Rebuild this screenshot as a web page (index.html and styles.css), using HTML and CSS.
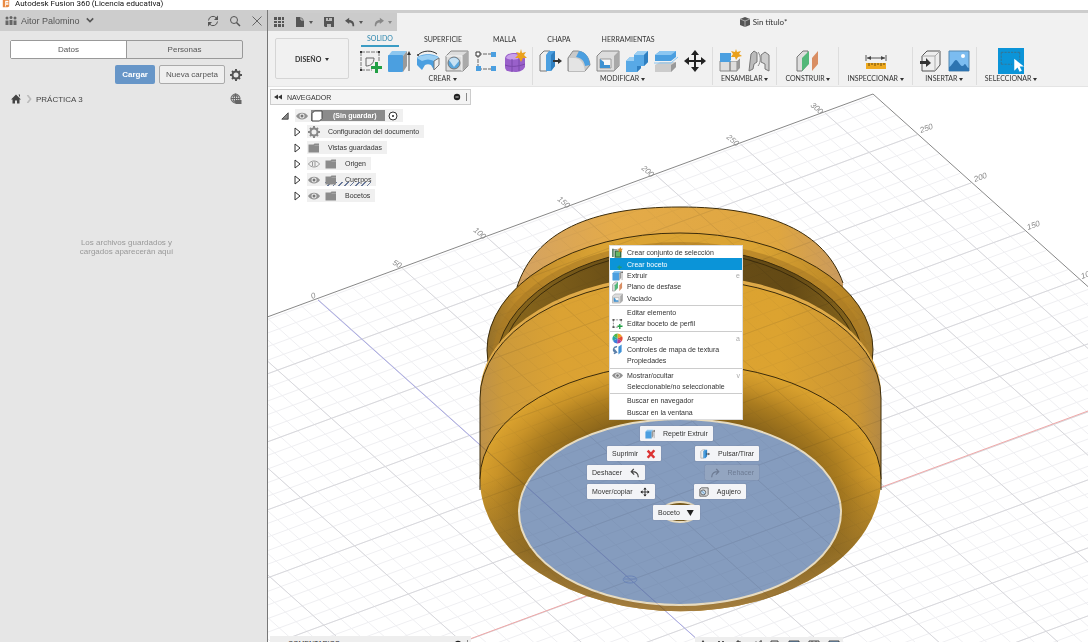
FILE: index.html
```html
<!DOCTYPE html>
<html lang="es">
<head>
    <meta charset="UTF-8">
    <meta name="viewport" content="width=device-width, initial-scale=1.0">
    <title>Autodesk Fusion 360 (Licencia educativa)</title>
    <link rel="stylesheet" href="styles.css">
</head>
<body>
    <!-- Iconos compartidos -->
    <svg class="sprite" aria-hidden="true">
        <symbol id="sketch" viewBox="0 0 24 24">
            <path d="M3 3h18M3 21h11M3 3v18M21 3v10" fill="none" stroke="#777" stroke-dasharray="4 1"/>
            <path d="M8 17V9h8M8 17c5 0 8-3 8-8" fill="none" stroke="#666"/>
            <path d="M2 2h2v2H2zM20 2h2v2h-2zM2 20h2v2H2z" fill="#333"/>
            <path d="M17 13h3v4h4v3h-4v4h-3v-4h-4v-3h4z" fill="#22a045"/>
        </symbol>
        <symbol id="extrude" viewBox="0 0 24 24">
            <path d="M1 7l4-5h15l-4 5z" fill="#8cc6ef"/>
            <rect x="1" y="6" width="15" height="17" rx="1" fill="#4b9fe0"/>
            <path d="M16 7l4-5v15l-4 6z" fill="#9a9a9a"/>
            <path d="M22 22V4" stroke="#555"/><path d="M20 6l2-4 2 4z" fill="#333"/>
        </symbol>
        <symbol id="revolve" viewBox="0 0 24 24">
            <path d="M1 9c3-5 19-5 22 0v7l-5 5-3-5c-2-1-4-1-6 0l-3 5-5-5z" fill="#4b9fe0"/>
            <path d="M1 9c3-4 19-4 22 0l-5 3c-4-2-8-2-12 0z" fill="#9bcff3"/>
            <path d="M18 12l5-3v7l-5 5z" fill="#eee" stroke="#777"/>
            <path d="M2 6c5-5 14-5 19-1" fill="none" stroke="#333"/><circle cx="2" cy="6" r="1" fill="#333"/>
        </symbol>
        <symbol id="hole" viewBox="0 0 24 24">
            <path d="M1 7l5-5h17v15l-5 5H1z" fill="#ddd" stroke="#888"/>
            <path d="M17 7l6-5v15l-6 5z" fill="#aaa"/><path d="M1 7h16v15" fill="none" stroke="#f5f5f5"/>
            <circle cx="9" cy="14" r="6" fill="#5aa6dc" stroke="#777"/><path d="M4 11a6 6 0 0 1 10 1l-5 6z" fill="#c8e2f4"/>
        </symbol>
        <symbol id="pattern" viewBox="0 0 24 24">
            <path d="M4 5h16M4 5v15h16" fill="none" stroke="#666" stroke-dasharray="4 1"/>
            <path d="M2 3h4v4H2z" fill="#fff" stroke="#333"/>
            <path d="M17 3h5v5h-5zM2 17h5v5H2zM17 17h5v5h-5z" fill="#4b9fe0"/>
        </symbol>
        <symbol id="form" viewBox="0 0 24 24">
            <path d="M2 9c1-4 5-5 10-5 6 0 10 2 10 6v8c-2 4-6 5-10 5-6 0-10-1-10-5z" fill="#9960ca"/>
            <path d="M3 9c1-3 4-4 9-4l4 1-1 4c-5 1-9 1-12-1z" fill="#c9a0ea"/>
            <path d="M2 16c5 2 12 2 20-1M9 10v13M16 10v12" fill="none" stroke="#7b48aa"/>
            <path d="M18 0l1 4 4-1-2 3 3 3-4 0-2 4-2-4-4 0 3-3-2-3 4 1z" fill="#eaa11c"/>
        </symbol>
        <symbol id="presspull" viewBox="0 0 24 24">
            <path d="M2 6l4-4h6L9 6v16H2z" fill="#eee" stroke="#777"/>
            <path d="M8 6l3-4h6v15l-4 5H8z" fill="#4b9fe0"/><path d="M13 6l4-4v15l-4 5z" fill="#2f7fc0"/>
            <path d="M15 12h5" stroke="#333" stroke-width="2"/><path d="M20 9l4 3-4 3z" fill="#333"/>
        </symbol>
        <symbol id="fillet" viewBox="0 0 24 24">
            <path d="M1 22V9l5-7h5c7 1 11 6 12 14l-5 6z" fill="#c9c9c9" stroke="#888"/>
            <path d="M2 9h5c7 0 10 6 11 13H2z" fill="#e4e4e4"/>
            <path d="M12 2c7 1 10 6 11 14l-5 1C17 11 14 9 9 8z" fill="#4b9fe0"/>
        </symbol>
        <symbol id="shell" viewBox="0 0 24 24">
            <path d="M1 7l5-5h17v15l-5 5H1z" fill="#ddd" stroke="#888"/>
            <path d="M18 7l5-5v15l-5 5z" fill="#a9a9a9"/>
            <path d="M4 10h11v9H4z" fill="#f8f8f8" stroke="#999"/><path d="M4 10l4 3v3h6v3H4z" fill="#3f92d2"/>
        </symbol>
        <symbol id="combine" viewBox="0 0 24 24">
            <path d="M9 6l4-4h10v11l-4 4h-3v2l-4 4H1V12l4-4h4z" fill="#58a9e6"/>
            <path d="M9 6l4-4h10l-4 4zM1 12l4-4h4v4z" fill="#9bcff3"/><path d="M19 6l4-4v11l-4 4zM12 17h4v2l-4 4z" fill="#2f7fc0"/>
        </symbol>
        <symbol id="split" viewBox="0 0 24 24">
            <path d="M1 6l5-4h16v6l-5 4H1z" fill="#4b9fe0"/><path d="M1 6l5-4h16l-5 4z" fill="#8bc6f1"/>
            <path d="M1 16l5-3h16v5l-5 5H1z" fill="#ccc"/><path d="M17 16l5-3v5l-5 5z" fill="#999"/>
            <path d="M0 14h17l7-6" fill="none" stroke="#8bc6f1"/>
        </symbol>
        <symbol id="move" viewBox="0 0 24 24">
            <path d="M12 3v18M3 12h18" stroke="#222" stroke-width="2"/>
            <path d="M12 1l4 5H8zM12 23l4-5H8zM1 12l5-4v8zM23 12l-5-4v8z" fill="#222"/>
        </symbol>
        <symbol id="component" viewBox="0 0 24 24">
            <path d="M2 12h10v10H2zM12 12h7v10h-7z" fill="#dedede" stroke="#888"/><path d="M19 12l3-3v10l-3 3z" fill="#999"/>
            <path d="M2 4h11v9H2z" fill="#4b9fe0"/><path d="M12 12l3-3h7l-3 3z" fill="#f4f4f4"/>
            <path d="M18 0l1 3 4-1-2 3 3 2-4 1-2 3-1-3-4 0 2-3-2-3 4 1z" fill="#eaa11c"/>
        </symbol>
        <symbol id="joint" viewBox="0 0 24 24">
            <path d="M4 5l3-3 3 2v9l-3 2-1 5-4 2 1-9z" fill="#bbb" stroke="#777"/>
            <path d="M14 6l4-3 4 3v16l-4-2v-5l-4-2z" fill="#ccc" stroke="#777"/><path d="M11 3c3 4 3 10 0 14" fill="none" stroke="#888"/>
        </symbol>
        <symbol id="planes" viewBox="0 0 24 24">
            <path d="M1 8l6-6h5v13l-6 7H1z" fill="#ddd" stroke="#777"/>
            <path d="M6 9l7-7v13l-7 7z" fill="#52b879"/><path d="M16 9l6-7v13l-6 7z" fill="#d98e63"/>
        </symbol>
        <symbol id="measure" viewBox="0 0 24 24">
            <path d="M2 6v6M22 6v6M3 9h18" stroke="#555"/><path d="M3 9l4-2v4zM21 9l-4-2v4z" fill="#444"/>
            <path d="M2 14h20v6H2z" fill="#efaa20"/><path d="M5 14v3M8 14v2M11 14v3M14 14v2M17 14v3M20 14v2" stroke="#6b4b0b"/>
        </symbol>
        <symbol id="insert" viewBox="0 0 24 24">
            <path d="M4 7l5-5h13v14l-5 6H4z" fill="#eee" stroke="#555"/><path d="M4 7h13v15M17 7l5-5" fill="none" stroke="#aaa"/>
            <path d="M2 12h6V9l5 5-5 4v-3H2z" fill="#333"/>
        </symbol>
        <symbol id="picture" viewBox="0 0 24 24">
            <path d="M2 2h20v20H2z" fill="#7bbcf0" stroke="#5688af"/><circle cx="16" cy="7" r="2" fill="#fff"/>
            <path d="M2 18c3-1 5-7 7-7s4 6 6 6 2-2 3-2 2 4 4 4v3H2z" fill="#2d74b1"/>
        </symbol>
        <symbol id="select" viewBox="0 0 24 24">
            <path d="M0 0h24v24H0z" fill="#0b94d8"/><path d="M3 4h17M3 15h10M3 4v11M20 4v7" stroke="#337799" stroke-dasharray="2 1"/>
            <path d="M15 10v11l3-3 2 4 2-1-2-4h4z" fill="#fff"/>
        </symbol>
        <symbol id="eye" viewBox="0 0 24 24">
            <path d="M0 12c5-9 19-9 24 0-5 9-19 9-24 0z" fill="#929292"/><circle cx="12" cy="12" r="5" fill="#eee"/><circle cx="12" cy="12" r="3" fill="#777"/>
        </symbol>
        <symbol id="eye-off" viewBox="0 0 24 24">
            <path d="M1 12c5-8 17-8 22 0-5 8-17 8-22 0z" fill="none" stroke="#999" stroke-width="2"/><path d="M9 8v8M14 7v10" stroke="#999" stroke-width="2"/>
        </symbol>
        <symbol id="folder" viewBox="0 0 24 24"><path d="M1 5h10l2-2h9v18H1z" fill="#8b8b8b"/><path d="M13 7h9" stroke="#bbb"/></symbol>
        <symbol id="gear" viewBox="0 0 24 24">
            <circle cx="12" cy="12" r="7" fill="none" stroke="currentColor" stroke-width="4"/>
            <path d="M12 0v5M12 19v5M0 12h5M19 12h5M4 4l3 3M17 17l3 3M20 4l-3 3M4 20l3-3" stroke="currentColor" stroke-width="4"/>
        </symbol>
        <symbol id="undo" viewBox="0 0 24 24"><path d="M0 9l10-7v5c8 0 13 5 12 15h-4c0-6-2-9-8-9v4z" fill="currentColor"/></symbol>
        <symbol id="redo" viewBox="0 0 24 24"><path d="M24 9L14 2v5C6 7 1 12 2 22h3c1-6 3-9 9-9v4z" fill="currentColor"/></symbol>
    </svg>

    <header class="titlebar">
        <svg class="logo" viewBox="0 0 10 10"><path d="M1 0h8v8L7 9H1z" fill="#e98a43"/><path d="M4 1h4v2H5v1h3v2H5v2H4z" fill="#fff"/></svg>
        <span>Autodesk Fusion 360 (Licencia educativa)</span>
    </header>

    <div class="app">
        <aside class="data-panel">
            <div class="panel-head">
                <svg class="icon-12" viewBox="0 0 24 24" fill="#666"><circle cx="4" cy="6" r="3"/><circle cx="12" cy="5" r="3"/><circle cx="20" cy="6" r="3"/><path d="M1 11h6v9H1zM9 10h6v10H9zM17 11h6v9h-6z"/></svg>
                <button class="team">Aitor Palomino
                    <svg class="icon-8" viewBox="0 0 10 10"><path d="M1 3l4 4 4-4" fill="none" stroke="#555" stroke-width="2"/></svg>
                </button>
                <button class="plain" aria-label="Actualizar"><svg class="icon-12" viewBox="0 0 24 24"><path d="M3 11a9 9 0 0 1 16-5M21 13a9 9 0 0 1-16 5" fill="none" stroke="#555" stroke-width="2"/><path d="M22 1v9h-8zM2 23v-9h8z" fill="#555"/></svg></button>
                <button class="plain" aria-label="Buscar"><svg class="icon-12" viewBox="0 0 24 24"><circle cx="10" cy="10" r="7" fill="none" stroke="#555" stroke-width="2"/><path d="M15 15l7 7" stroke="#555" stroke-width="3"/></svg></button>
                <button class="plain" aria-label="Cerrar"><svg class="icon-12" viewBox="0 0 24 24"><path d="M3 3l18 18M21 3L3 21" stroke="#666" stroke-width="2"/></svg></button>
            </div>
            <div class="panel-tabs">
                <button class="active">Datos</button>
                <button>Personas</button>
            </div>
            <div class="panel-actions">
                <button class="upload">Cargar</button>
                <button class="new-folder">Nueva carpeta</button>
                <button class="plain" aria-label="Ajustes"><svg class="icon-12"><use href="#gear"/></svg></button>
            </div>
            <div class="breadcrumb">
                <svg class="icon-12" viewBox="0 0 24 24"><path d="M12 3l10 10h-3v8h-5v-6h-4v6H5v-8H2zM17 3h3v6z" fill="#444"/></svg>
                <svg class="icon-8" viewBox="0 0 10 10"><path d="M3 0l4 5-4 5" fill="none" stroke="#bbb" stroke-width="2"/></svg>
                <a href="#">PRÁCTICA 3</a>
                <svg class="icon-12 globe" viewBox="0 0 24 24"><circle cx="11" cy="11" r="9" fill="#ddd" stroke="#666" stroke-width="2"/><path d="M2 11h18M11 2v18M4 6h14M4 16h14M11 2c-6 4-6 14 0 18M11 2c6 4 6 14 0 18" fill="none" stroke="#666" stroke-width="2"/><path d="M12 14h11v8H12z" fill="#666"/></svg>
            </div>
            <p class="empty">Los archivos guardados y<br>cargados aparecerán aquí</p>
        </aside>

        <main class="workspace">
            <div class="topbar">
                <div class="quick">
                    <button class="plain" aria-label="Panel de datos"><svg class="icon-10" viewBox="0 0 10 10"><path d="M0 0h3v3H0zM4 0h3v3H4zM8 0h2v3H8zM0 4h3v2H0zM4 4h3v2H4zM8 4h2v2H8zM0 7h3v3H0zM4 7h3v3H4zM8 7h2v3H8z" fill="#555"/></svg></button>
                    <button class="plain" aria-label="Archivo"><svg class="icon-10" viewBox="0 0 10 10"><path d="M1 0h5l3 3v7H1z" fill="#555"/><path d="M6 0v3h3" fill="none" stroke="#ccc"/></svg><i class="caret"></i></button>
                    <button class="plain" aria-label="Guardar"><svg class="icon-10" viewBox="0 0 10 10"><path d="M0 0h10v10H1L0 9z" fill="#555"/><path d="M2 1h6v3H2zM3 7h4v3H3z" fill="#bbb"/><path d="M4 1h1v2H4z" fill="#555"/></svg></button>
                    <button class="plain" aria-label="Deshacer"><svg class="icon-10"><use href="#undo"/></svg><i class="caret"></i></button>
                    <button class="plain dim" aria-label="Rehacer"><svg class="icon-10"><use href="#redo"/></svg><i class="caret"></i></button>
                </div>
                <div class="doc-title">
                    <svg class="icon-10" viewBox="0 0 10 10"><path d="M0 2l5-2 5 2v6l-5 2-5-2z" fill="#555"/><path d="M0 2l5 2v6M5 4l5-2" stroke="#aaa" fill="none"/></svg>
                    Sin título*
                </div>
            </div>

            <div class="ribbon">
                <button class="mode">DISEÑO <i class="caret"></i></button>
                <div class="tools">
                    <nav class="tabs">
                        <button class="active">SOLIDO</button>
                        <button>SUPERFICIE</button>
                        <button>MALLA</button>
                        <button>CHAPA</button>
                        <button>HERRAMIENTAS</button>
                    </nav>
                    <div class="groups">
                        <section class="group">
                            <div class="icons">
                                <svg><use href="#sketch"/></svg><svg><use href="#extrude"/></svg><svg><use href="#revolve"/></svg>
                                <svg><use href="#hole"/></svg><svg><use href="#pattern"/></svg><svg><use href="#form"/></svg>
                            </div>
                            <button>CREAR <i class="caret"></i></button>
                        </section>
                        <section class="group">
                            <div class="icons">
                                <svg><use href="#presspull"/></svg><svg><use href="#fillet"/></svg><svg><use href="#shell"/></svg>
                                <svg><use href="#combine"/></svg><svg><use href="#split"/></svg><svg><use href="#move"/></svg>
                            </div>
                            <button>MODIFICAR <i class="caret"></i></button>
                        </section>
                        <section class="group">
                            <div class="icons"><svg><use href="#component"/></svg><svg><use href="#joint"/></svg></div>
                            <button>ENSAMBLAR <i class="caret"></i></button>
                        </section>
                        <section class="group">
                            <div class="icons"><svg><use href="#planes"/></svg></div>
                            <button>CONSTRUIR <i class="caret"></i></button>
                        </section>
                        <section class="group">
                            <div class="icons"><svg><use href="#measure"/></svg></div>
                            <button>INSPECCIONAR <i class="caret"></i></button>
                        </section>
                        <section class="group">
                            <div class="icons"><svg><use href="#insert"/></svg><svg><use href="#picture"/></svg></div>
                            <button>INSERTAR <i class="caret"></i></button>
                        </section>
                        <section class="group">
                            <div class="icons"><svg class="big"><use href="#select"/></svg></div>
                            <button>SELECCIONAR <i class="caret"></i></button>
                        </section>
                    </div>
                </div>
            </div>

            <div class="canvas">
                <svg class="scene" viewBox="268 87 820 555" preserveAspectRatio="xMinYMin slice">
                    <defs>
                        <linearGradient id="capFill"><stop offset="0" stop-color="#d3a262"/><stop offset=".3" stop-color="#e4ab49"/><stop offset=".8" stop-color="#dfa640"/><stop offset="1" stop-color="#c99a5f"/></linearGradient>
                        <linearGradient id="flangeFill"><stop offset="0" stop-color="#94702a"/><stop offset=".08" stop-color="#c08b29"/><stop offset=".3" stop-color="#dba434"/><stop offset=".7" stop-color="#dba434"/><stop offset=".93" stop-color="#b98625"/><stop offset="1" stop-color="#a57b2c"/></linearGradient>
                        <linearGradient id="grooveFill"><stop offset="0" stop-color="#8c691d"/><stop offset=".3" stop-color="#6d5117"/><stop offset=".8" stop-color="#644a15"/><stop offset="1" stop-color="#8c691d"/></linearGradient>
                        <linearGradient id="bodyFill"><stop offset="0" stop-color="#bd9149"/><stop offset=".06" stop-color="#cd9a3a"/><stop offset=".2" stop-color="#dba233"/><stop offset=".75" stop-color="#dca330"/><stop offset=".94" stop-color="#cc9633"/><stop offset="1" stop-color="#b48944"/></linearGradient>
                        <radialGradient id="baseFill" gradientUnits="userSpaceOnUse" cx="0" cy="0" r="1" gradientTransform="translate(680 495) scale(206 131)"><stop offset=".62" stop-color="#89641a"/><stop offset=".78" stop-color="#a97b1f"/><stop offset=".9" stop-color="#c99328"/><stop offset="1" stop-color="#d9a12e"/></radialGradient>
                        <linearGradient id="baseShade" x2="0" y2="1"><stop offset=".45" stop-color="#73551c" stop-opacity="0"/><stop offset=".75" stop-color="#735823" stop-opacity=".6"/><stop offset="1" stop-color="#a07c42" stop-opacity=".9"/></linearGradient>
                        <clipPath id="modelClip"><path d="M480 398C480 370 488 350 488 350C495 320 505 300 517 287C535 232 590 207 680 207S825 232 843 283C860 300 872 330 873 360L881 398V479A200 132 0 0 1 480 479z"/></clipPath>
                    </defs>
                    <g id="grid" transform="matrix(84.5 -31.1 53.8 48.2 318 299.5)">
                        <path class="minor" id="minorLines"/>
                        <path class="major" id="majorLines"/>
                    </g>
                    <path class="edge" d="M183 348L873 94L1142 335"/>
                    <path class="axis-z" d="M318 300L709 650"/>
                    <path class="axis-x" d="M440 650L1088 411"/>
                    <g class="ruler">
                        <text transform="translate(312 299) rotate(-20)">0</text>
                        <text transform="translate(392 264) rotate(30)">50</text>
                        <text transform="translate(473 231) rotate(40)">100</text>
                        <text transform="translate(557 200) rotate(40)">150</text>
                        <text transform="translate(641 169) rotate(40)">200</text>
                        <text transform="translate(726 138) rotate(40)">250</text>
                        <text transform="translate(810 106) rotate(40)">300</text>
                        <text transform="translate(921 133) rotate(-20)">250</text>
                        <text transform="translate(975 182) rotate(-20)">200</text>
                        <text transform="translate(1028 230) rotate(-20)">150</text>
                        <text transform="translate(1082 279) rotate(-20)">100</text>
                    </g>

                    <!-- Pieza: tapa, pestaña, ranura, cuerpo y base -->
                    <path d="M517 287C535 232 590 207 680 207S825 232 843 283V350H517z" fill="url(#capFill)"/>
                    <path class="line" d="M517 287C535 232 590 207 680 207S825 232 843 283"/>
                    <ellipse cx="680" cy="350" rx="193" ry="117" fill="url(#flangeFill)" stroke="#3c2c0b"/>
                    <ellipse cx="680" cy="359" rx="188" ry="117" fill="#a87a25" opacity=".6"/>
                    <ellipse cx="680" cy="366" rx="184" ry="118" fill="url(#grooveFill)" stroke="#3c2c0b"/>
                    <ellipse class="line" cx="680" cy="369" rx="180" ry="118"/>
                    <path d="M480 394A200 119 0 0 1 881 394V479H480z" fill="#dfaa48"/>
                    <path d="M480 479V398A200 119 0 0 1 881 398V479" fill="url(#bodyFill)" stroke="#3c2c0b"/>
                    <path d="M480 479A200 115 0 0 1 881 479A200 132 0 0 1 480 479z" fill="url(#baseFill)"/>
                    <path d="M480 479A200 115 0 0 1 881 479A200 132 0 0 1 480 479z" fill="url(#baseShade)"/>
                    <path class="line" d="M480 490V479A200 115 0 0 1 881 479V490"/>
                    <ellipse class="face" cx="680" cy="512" rx="161" ry="93"/>
                    <ellipse cx="680" cy="512" rx="18" ry="10" fill="#765817" stroke="#e8dcc0" stroke-width="2"/>
                    <g class="ghost" clip-path="url(#modelClip)">
                        <use href="#grid"/>
                        <path class="axis-z" d="M318 300L709 650"/>
                    </g>
                    <path d="M624 579h12M630 576c-9 0-9 7 0 7s9-7 0-7z" fill="none" stroke="#6a84b8"/>
                </svg>

                <section class="browser">
                    <div class="browser-head">
                        <svg class="icon-8" viewBox="0 0 10 10"><path d="M5 2v6L0 5zM10 2v6L5 5z" fill="#333"/></svg>
                        <span>NAVEGADOR</span>
                        <svg class="icon-8" viewBox="0 0 10 10"><circle cx="5" cy="5" r="4" fill="#222"/><path d="M3 5h4" stroke="#fff"/></svg>
                        <i class="grip"></i>
                    </div>
                    <ul class="tree">
                        <li class="root">
                            <svg class="icon-8" viewBox="0 0 10 10"><path d="M9 1v8H1z" fill="#888" stroke="#333"/></svg>
                            <div class="node">
                                <svg class="icon-12"><use href="#eye"/></svg>
                                <div class="selected">
                                    <svg class="icon-12" viewBox="0 0 24 24"><path d="M2 7l5-5h15v15l-5 5H2z" fill="#fff" stroke="#444" stroke-width="2"/></svg>
                                    <span>(Sin guardar)</span>
                                </div>
                                <svg class="icon-10" viewBox="0 0 10 10"><circle cx="5" cy="5" r="4" fill="#fff" stroke="#333"/><circle cx="5" cy="5" r="1" fill="#222"/></svg>
                            </div>
                        </li>
                        <li>
                            <svg class="icon-10" viewBox="0 0 10 10"><path d="M3 1l5 4-5 4z" fill="#fff" stroke="#333"/></svg>
                            <div class="node"><svg class="icon-12 gray"><use href="#gear"/></svg><span>Configuración del documento</span></div>
                        </li>
                        <li>
                            <svg class="icon-10" viewBox="0 0 10 10"><path d="M3 1l5 4-5 4z" fill="#fff" stroke="#333"/></svg>
                            <div class="node"><svg class="icon-12"><use href="#folder"/></svg><span>Vistas guardadas</span></div>
                        </li>
                        <li>
                            <svg class="icon-10" viewBox="0 0 10 10"><path d="M3 1l5 4-5 4z" fill="#fff" stroke="#333"/></svg>
                            <div class="node"><svg class="icon-12"><use href="#eye-off"/></svg><div class="item"><svg class="icon-12"><use href="#folder"/></svg><span>Origen</span></div></div>
                        </li>
                        <li>
                            <svg class="icon-10" viewBox="0 0 10 10"><path d="M3 1l5 4-5 4z" fill="#fff" stroke="#333"/></svg>
                            <div class="node"><svg class="icon-12"><use href="#eye"/></svg><div class="item dotted"><svg class="icon-12"><use href="#folder"/></svg><span>Cuerpos</span></div></div>
                        </li>
                        <li>
                            <svg class="icon-10" viewBox="0 0 10 10"><path d="M3 1l5 4-5 4z" fill="#fff" stroke="#333"/></svg>
                            <div class="node"><svg class="icon-12"><use href="#eye"/></svg><div class="item"><svg class="icon-12"><use href="#folder"/></svg><span>Bocetos</span></div></div>
                        </li>
                    </ul>
                </section>

                <div class="context-menu">
                    <button><svg viewBox="0 0 24 24"><path d="M2 4v18M7 9h12v13H7z" stroke="#356b44" stroke-width="3" fill="#68b763"/><path d="M2 6h10" stroke="#777" stroke-width="2"/><path d="M18 0l2 4 4 0-3 3 1 5-4-3-4 3 1-5-3-3h4z" fill="#d98b26"/></svg>Crear conjunto de selección</button>
                    <button class="current"><svg viewBox="0 0 24 24"><path d="M16 14v9M12 18h9" stroke="#1d9c74" stroke-width="3"/></svg>Crear boceto</button>
                    <button><svg><use href="#extrude"/></svg>Extruir<kbd>e</kbd></button>
                    <button><svg><use href="#planes"/></svg>Plano de desfase</button>
                    <button><svg><use href="#shell"/></svg>Vaciado</button>
                    <hr>
                    <button><svg></svg>Editar elemento</button>
                    <button><svg viewBox="0 0 24 24"><path d="M3 4h17M3 20h10M3 4v16M20 4v8" fill="none" stroke="#888" stroke-width="2" stroke-dasharray="4 2"/><path d="M1 2h4v4H1zM18 2h4v4h-4zM1 18h4v4H1z" fill="#555"/><path d="M17 13v11M12 18h11" stroke="#22a045" stroke-width="3"/></svg>Editar boceto de perfil</button>
                    <hr>
                    <button><svg viewBox="0 0 24 24"><path d="M12 12V1a11 11 0 0 1 10 6z" fill="#f0a224"/><path d="M12 12l10-5a11 11 0 0 1-1 11z" fill="#e44b35"/><path d="M12 12l9 6a11 11 0 0 1-10 5z" fill="#b14399"/><path d="M12 12l-1 11a11 11 0 0 1-9-6z" fill="#3b7edb"/><path d="M12 12L2 17A11 11 0 0 1 3 6z" fill="#27a7a6"/><path d="M12 12L3 6a11 11 0 0 1 9-5z" fill="#55b649"/></svg>Aspecto<kbd>a</kbd></button>
                    <button><svg viewBox="0 0 24 24"><path d="M11 6c-8-1-11 9-3 12M5 12l5 6-6 3" fill="none" stroke="#5b7fa9" stroke-width="3"/><path d="M14 6l7-5v16l-7 6z" fill="#3e91d7"/></svg>Controles de mapa de textura</button>
                    <button><svg></svg>Propiedades</button>
                    <hr>
                    <button><svg><use href="#eye"/></svg>Mostrar/ocultar<kbd>v</kbd></button>
                    <button><svg></svg>Seleccionable/no seleccionable</button>
                    <hr>
                    <button><svg></svg>Buscar en navegador</button>
                    <button><svg></svg>Buscar en la ventana</button>
                </div>

                <div class="wheel">
                    <div class="wheel-row top"><button><svg><use href="#extrude"/></svg>Repetir Extruir</button></div>
                    <div class="wheel-row second">
                        <button>Suprimir<svg viewBox="0 0 24 24"><path d="M4 4l16 17M20 3L4 21" stroke="#dc3434" stroke-width="6"/></svg></button>
                        <button><svg><use href="#presspull"/></svg>Pulsar/Tirar</button>
                    </div>
                    <div class="wheel-row">
                        <button>Deshacer<svg viewBox="0 0 24 24"><path d="M9 2L3 9l7 7M3 9c10-1 17 3 17 13" fill="none" stroke="#444" stroke-width="3"/></svg></button>
                        <button disabled><svg viewBox="0 0 24 24"><path d="M15 2l6 7-7 7M21 9C11 8 4 12 4 22" fill="none" stroke="currentColor" stroke-width="3"/></svg>Rehacer</button>
                    </div>
                    <div class="wheel-row fourth">
                        <button>Mover/copiar<svg><use href="#move"/></svg></button>
                        <button><svg viewBox="0 0 24 24"><path d="M2 5l4-3h16v16l-4 4H2z" fill="#ddd" stroke="#555" stroke-width="2"/><circle cx="10" cy="13" r="6" fill="#c9def0" stroke="#555" stroke-width="2"/><path d="M7 10l6 6" stroke="#4b8dc4" stroke-width="2"/></svg>Agujero</button>
                    </div>
                    <div class="wheel-row last"><button>Boceto<svg viewBox="0 0 24 24"><path d="M4 5h17l-8 14z" fill="#222"/></svg></button></div>
                </div>

                <div class="comments">
                    <span>COMENTARIOS</span>
                    <svg class="icon-8" viewBox="0 0 10 10"><circle cx="5" cy="5" r="4" fill="#222"/></svg>
                    <i class="grip"></i>
                </div>
                <div class="view-bar">
                    <svg viewBox="0 0 10 10"><path d="M5 1v4L2 9M5 5l3 4" fill="none" stroke="#444"/><path d="M5 0l2 3H3z" fill="#444"/></svg>
                    <svg viewBox="0 0 10 10"><path d="M1 3h8v6H1zM2 1h2v2H2zM6 1h2v2H6z" fill="#555"/></svg>
                    <svg viewBox="0 0 10 10"><path d="M1 4l2-1V1h2v1h2v1h2v4L6 10H4z" fill="#777" stroke="#444"/></svg>
                    <svg viewBox="0 0 10 10"><circle cx="4" cy="5" r="3" fill="none" stroke="#444"/><path d="M6 8l2 2M9 0v5M7 2h3" stroke="#444"/></svg>
                    <svg viewBox="0 0 10 10"><path d="M1 1h7v8H1z" fill="#ddd" stroke="#444"/><circle cx="6" cy="6" r="3" fill="#eee" stroke="#444"/></svg>
                    <svg class="wide" viewBox="0 0 10 10"><path d="M0 1h10v7H0z" fill="#6496c4" stroke="#444"/></svg>
                    <svg class="wide" viewBox="0 0 10 10"><path d="M0 1h10v8H0zM0 4h10M0 7h10M3 1v8M7 1v8" fill="none" stroke="#444"/></svg>
                    <svg class="wide" viewBox="0 0 10 10"><path d="M0 1h10v8H0z" fill="#79a8d8" stroke="#444"/></svg>
                </div>
            </div>
        </main>
    </div>

    <script>
        // Rejilla del plano: 5 divisiones por cada linea principal
        const right = 6.57;
        const bottom = 14;
        const firstRow = 0.82;

        function gridPath(step) {
            let d = "";
            for (let u = -8; u < right; u += step) {
                d += "M" + u.toFixed(2) + " 0V" + bottom;
            }
            for (let v = firstRow - Math.floor(firstRow / step) * step; v < bottom; v += step) {
                d += "M-8 " + v.toFixed(2) + "H" + right;
            }
            return d;
        }

        document.getElementById("minorLines").setAttribute("d", gridPath(0.2));
        document.getElementById("majorLines").setAttribute("d", gridPath(1));
    </script>
</body>
</html>
```
FILE: styles.css
```css
html, body {
    margin: 0;
    height: 100%;
}
body {
    display: flex;
    flex-direction: column;
    overflow: hidden;
    background: #fff;
    color: #333;
    font-family: "Liberation Sans", Arial, sans-serif;
    font-size: 7px;
}
button {
    margin: 0;
    padding: 0;
    border: 0;
    background: none;
    color: inherit;
    font: inherit;
    white-space: nowrap;
}
svg {
    flex: none;
}
.sprite {
    position: absolute;
    width: 0;
    height: 0;
}
.icon-8 {
    width: 8px;
    height: 8px;
}
.icon-10 {
    width: 10px;
    height: 10px;
}
.icon-12 {
    width: 12px;
    height: 12px;
}
.gray {
    color: #888;
}
.plain {
    display: flex;
    align-items: center;
    gap: 4px;
    color: #555;
}
.caret {
    display: inline-block;
    border: 2px solid transparent;
    border-top: 3px solid currentColor;
    border-bottom: 0;
    vertical-align: middle;
}
.titlebar {
    display: flex;
    flex: none;
    gap: 5px;
    height: 10px;
    padding-left: 2px;
    color: #111;
    font-family: Roboto, sans-serif;
    font-size: 8px;
    line-height: 7px;
}
.logo {
    width: 8px;
    height: 8px;
}
.app {
    display: flex;
    flex: 1;
    min-height: 0;
}

/* Panel de datos */
.data-panel {
    flex: none;
    box-sizing: border-box;
    width: 268px;
    border-right: 1px solid #777;
    background: #e6e6e6;
    color: #555;
    font-size: 8px;
}
.panel-head {
    display: flex;
    align-items: center;
    gap: 10px;
    height: 21px;
    padding: 0 4px 0 5px;
    background: #cdcdcd;
}
.team {
    flex: 1;
    margin-left: -6px;
    font-size: 9px;
    text-align: left;
}
.team svg {
    margin-left: 4px;
}
.panel-tabs {
    display: flex;
    height: 17px;
    margin: 9px 24px 0 10px;
    border: 1px solid #999;
    border-radius: 2px;
}
.panel-tabs button {
    flex: 1;
}
.panel-tabs .active {
    border-right: 1px solid #999;
    background: #fff;
}
.panel-actions {
    display: flex;
    justify-content: flex-end;
    align-items: center;
    gap: 4px;
    margin: 6px 25px 0 0;
}
.panel-actions button {
    height: 19px;
}
.panel-actions .upload {
    padding: 0 7px;
    border-radius: 2px;
    background: #6796c8;
    color: #fff;
    font-weight: bold;
}
.panel-actions .new-folder {
    padding: 0 6px;
    border: 1px solid #aaa;
    border-radius: 2px;
    background: #efefef;
}
.panel-actions .plain {
    margin-left: 1px;
}
.breadcrumb {
    display: flex;
    align-items: center;
    gap: 3px;
    margin: 9px 25px 0 10px;
}
.breadcrumb a {
    color: #444;
    text-decoration: none;
}
.globe {
    margin-left: auto;
}
.empty {
    margin: 133px 14px 0 0;
    color: #999;
    line-height: 9px;
    text-align: center;
}

/* Zona de trabajo */
.workspace {
    display: flex;
    flex: 1;
    flex-direction: column;
    min-width: 0;
}
.topbar {
    display: flex;
    flex: none;
    height: 18px;
    border-top: 3px solid #cdcdcd;
    background: #f1f1f1;
}
.quick {
    display: flex;
    align-items: center;
    justify-content: space-between;
    width: 118px;
    padding: 0 5px 0 6px;
    background: #cbcbcb;
}
.dim {
    color: #888;
}
.doc-title {
    display: flex;
    flex: 1;
    align-items: center;
    justify-content: center;
    gap: 3px;
    padding-left: 42px;
    font-family: Lato, sans-serif;
    font-size: 8px;
}
.ribbon {
    display: flex;
    flex: none;
    height: 56px;
    background: #f1f1f1;
    font-family: Lato, sans-serif;
    border-bottom: 1px solid #e4e4e4;
    box-sizing: border-box;
}
.mode {
    width: 74px;
    height: 41px;
    margin: 7px 4px 0 7px;
    border: 1px solid #d5d5d5;
    border-radius: 2px;
    font-weight: bold;
}
.mode .caret {
    margin-left: 2px;
}
.tabs {
    display: flex;
    gap: 19px;
    height: 16px;
    padding-left: 8px;
}
.tabs button {
    box-sizing: border-box;
    padding: 0 6px;
}
.tabs .active {
    border-bottom: 2px solid #3b9cc4;
    color: #2d87ae;
}
.groups {
    display: flex;
    height: 38px;
}
.group {
    display: flex;
    flex-direction: column;
    align-items: center;
    border-right: 1px solid #ddd;
}
.group:last-child {
    border-right: 0;
}
.group button {
    padding: 0 8px;
    line-height: 9px;
}
.icons {
    display: flex;
    align-items: center;
    gap: 5px;
    height: 27px;
    padding: 0 5px;
}
.icons svg {
    width: 24px;
    height: 24px;
}
.icons .big {
    width: 26px;
    height: 26px;
}
.canvas {
    position: relative;
    flex: 1;
    overflow: hidden;
    background: #fff;
}
.scene {
    position: absolute;
    width: 100%;
    height: 100%;
}
.scene .minor, .scene .major {
    fill: none;
    vector-effect: non-scaling-stroke;
}
.minor {
    stroke: #efeff2;
}
.major {
    stroke: #d8d8dc;
}
.scene .edge {
    fill: none;
    stroke: #888;
}
.axis-z {
    stroke: #aaaae6;
}
.axis-x {
    stroke: #f0a8a8;
}
.ghost {
    mix-blend-mode: multiply;
    opacity: .5;
}
.ruler text {
    fill: #888;
    font-size: 8px;
    font-style: italic;
}
.line {
    fill: none;
    stroke: #3c2c0b;
}
.face {
    fill: #859cbe;
    stroke: #e8dcc0;
    stroke-width: 2px;
}

/* Navegador */
.browser {
    position: absolute;
    top: 2px;
    left: 2px;
    width: 201px;
}
.browser-head {
    display: flex;
    align-items: center;
    gap: 5px;
    height: 16px;
    padding: 0 2px 0 3px;
    border: 1px solid #ccc;
    box-sizing: border-box;
    background: #f4f4f4;
}
.browser-head span {
    flex: 1;
}
.grip {
    width: 1px;
    height: 8px;
    border-left: 1px solid #888;
}
.tree {
    display: flex;
    flex-direction: column;
    gap: 3px;
    margin: 4px 0 0;
    padding: 0 0 0 22px;
    list-style: none;
}
.tree li {
    display: flex;
    align-items: center;
    gap: 5px;
    height: 13px;
}
.tree .root {
    margin-left: -11px;
    gap: 6px;
}
.node {
    display: flex;
    align-items: center;
    gap: 8px;
    height: 13px;
    padding: 0 5px 0 1px;
    background: #f0f0f0;
}
.root .node {
    gap: 3px;
}
.selected {
    display: flex;
    align-items: center;
    gap: 10px;
    height: 11px;
    padding-right: 8px;
    background: #8b8b8b;
    color: #fff;
    font-weight: bold;
}
.item {
    display: flex;
    align-items: center;
    gap: 8px;
    height: 13px;
    margin-left: -3px;
    box-sizing: border-box;
}
.dotted {
    background: repeating-linear-gradient(135deg, #69799a 0 1px, transparent 1px 4px) bottom / 100% 4px no-repeat;
}

/* Menu contextual */
.context-menu {
    position: absolute;
    top: 158px;
    left: 341px;
    display: flex;
    flex-direction: column;
    box-sizing: border-box;
    width: 134px;
    height: 175px;
    padding: 1px 0;
    border: 1px solid #ddd;
    background: #fff;
}
.context-menu button {
    display: flex;
    flex: 1;
    align-items: center;
    gap: 4px;
    padding: 0 2px;
}
.context-menu svg {
    width: 11px;
    height: 11px;
}
.context-menu .current {
    background: #0b94d8;
    color: #fff;
}
.context-menu hr {
    width: 100%;
    margin: 1px 0;
    border: 0;
    border-top: 1px solid #ccc;
}
.context-menu kbd {
    margin-left: auto;
    color: #aaa;
    font: inherit;
}

/* Menu radial */
.wheel {
    position: absolute;
    top: 339px;
    left: 319px;
    display: flex;
    flex-direction: column;
    gap: 4px;
    width: 172px;
}
.wheel-row {
    display: flex;
    justify-content: space-between;
}
.wheel-row button {
    display: flex;
    align-items: center;
    gap: 8px;
    height: 15px;
    padding: 0 5px;
    border-radius: 1px;
    background: #f3f4f7;
    box-shadow: 0 0 1px #667;
}
.wheel-row button:disabled {
    background: #93a5c0;
    color: #6d7b93;
}
.wheel svg {
    width: 10px;
    height: 10px;
}
.wheel .top {
    padding-left: 53px;
    margin-bottom: 1px;
}
.wheel .second {
    padding-left: 20px;
}
.wheel .fourth {
    padding-right: 13px;
}
.wheel .last {
    margin-top: 2px;
    padding-left: 66px;
}
.wheel .last button {
    gap: 5px;
}

/* Barras inferiores */
.comments {
    position: absolute;
    bottom: -9px;
    left: 2px;
    display: flex;
    align-items: center;
    gap: 5px;
    box-sizing: border-box;
    width: 201px;
    height: 15px;
    padding: 0 2px 0 18px;
    background: #eee;
}
.comments span {
    flex: 1;
}
.view-bar {
    position: absolute;
    bottom: -10px;
    left: 427px;
    display: flex;
    align-items: center;
    gap: 8px;
    height: 15px;
    padding: 0 3px;
    background: #eee;
}
.view-bar svg {
    width: 10px;
    height: 10px;
}
.view-bar .wide {
    width: 12px;
}
```
